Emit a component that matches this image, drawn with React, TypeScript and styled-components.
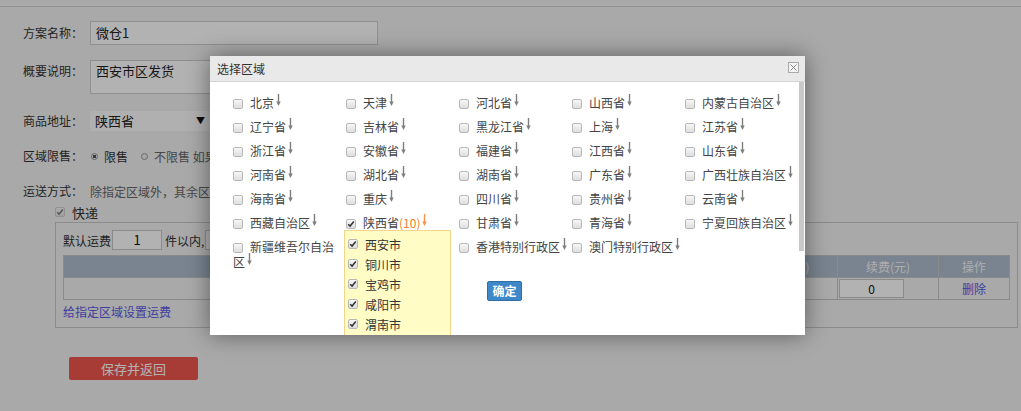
import React from 'react';
import styled, { createGlobalStyle } from 'styled-components';

const GlobalStyle = createGlobalStyle`
  html, body {
    margin: 0;
    padding: 0;
  }
  body {
    font-family: "Noto Sans CJK SC", "Liberation Sans", sans-serif;
    font-size: 12px;
    color: #333;
    overflow: hidden;
  }
`;

const Page = styled.div`
  position: relative;
  width: 1021px;
  height: 411px;
  background: #f2f2f2;
  overflow: hidden;
`;

const TopBar = styled.div`
  height: 6px;
  border-bottom: 1px solid #d2d2d2;
`;

const Form = styled.div`
  padding: 14px 0 0 23px;
`;

const Row = styled.div<{ $h: number; $mt: number; $top?: boolean }>`
  display: flex;
  align-items: ${(p) => (p.$top ? 'flex-start' : 'center')};
  height: ${(p) => p.$h}px;
  margin-top: ${(p) => p.$mt}px;
`;

const Label = styled.span<{ $pt?: number }>`
  width: 67px;
  line-height: 16px;
  padding-top: ${(p) => p.$pt || 0}px;
  color: #333;
  white-space: nowrap;
`;

const TextInput = styled.div`
  box-sizing: border-box;
  width: 288px;
  height: 24px;
  border: 1px solid #cfcfcf;
  background: #fff;
  padding: 0 5px;
  line-height: 22px;
  font-size: 13px;
  color: #222;
`;

const TextArea = styled.div`
  box-sizing: border-box;
  width: 288px;
  height: 34px;
  border: 1px solid #cfcfcf;
  background: #fff;
  padding: 2px 5px;
  line-height: 16px;
  font-size: 13px;
  color: #222;
`;

const SelectBox = styled.div`
  box-sizing: border-box;
  width: 120px;
  height: 20px;
  background: #fcfcfc;
  padding: 0 5px;
  display: flex;
  align-items: center;
  justify-content: space-between;
  line-height: 20px;
  font-size: 13px;
  color: #222;
`;

const Caret = styled.span`
  font-size: 9px;
  color: #111;
`;

const Radio = styled.span<{ $on?: boolean }>`
  box-sizing: border-box;
  width: 7px;
  height: 7px;
  border-radius: 50%;
  border: 1px solid #999;
  background: ${(p) => (p.$on ? 'radial-gradient(circle, #555 0 1.5px, #eee 2px)' : '#eee')};
  margin: 0 6px 0 1px;
`;

const RadioText = styled.span`
  margin-right: 12px;
  color: #333;
  white-space: nowrap;
`;

const Hint = styled.span`
  color: #666;
  white-space: nowrap;
`;

const Check = styled.span<{ $faded?: boolean }>`
  box-sizing: border-box;
  display: inline-block;
  width: 10px;
  height: 10px;
  border: 1px solid #b8b8b8;
  border-radius: 2px;
  background: linear-gradient(#f7f7f7, #dedede);
  position: relative;
  vertical-align: -1px;
  flex-shrink: 0;
  opacity: ${(p) => (p.$faded ? 0.6 : 1)};
  svg {
    position: absolute;
    left: 0px;
    top: 0px;
  }
`;

const ShipRow = styled.div`
  display: flex;
  align-items: center;
  height: 16px;
  margin: 5px 0 0 32px;
  gap: 7px;
  font-size: 13px;
`;

const ShipBox = styled.div`
  box-sizing: border-box;
  width: 963px;
  height: 106px;
  margin: 2px 0 0 32px;
  border: 1px solid #c8c8c8;
  padding: 7px 0 0 7px;
`;

const FeeLine = styled.div`
  display: flex;
  align-items: center;
  height: 20px;
  white-space: nowrap;
`;

const SmallInput = styled.div<{ $w: number }>`
  box-sizing: border-box;
  width: ${(p) => p.$w}px;
  height: 20px;
  border: 1px solid #c8c8c8;
  background: #fff;
  text-align: center;
  line-height: 18px;
  font-size: 13px;
  color: #111;
  margin: 0 3px 0 1px;
`;

const Table = styled.table`
  width: 946px;
  margin-top: 5px;
  border-collapse: collapse;
  table-layout: fixed;
  th, td {
    border: 1px solid #c6c6c6;
    height: 21px;
    padding: 0;
    text-align: center;
    font-weight: normal;
  }
  th {
    background: #aebdce;
    color: #f8f8f8;
  }
  td {
    background: #f2f2f2;
  }
`;

const CellInput = styled.div`
  box-sizing: border-box;
  width: 65px;
  height: 19px;
  margin-left: 1px;
  border: 1px solid #c8c8c8;
  background: #fff;
  line-height: 17px;
  color: #111;
`;

const LinkText = styled.span`
  color: #5a5ae4;
`;

const AreaLink = styled.div`
  margin-top: 4px;
  line-height: 16px;
  color: #5a5ae4;
`;

const SaveButton = styled.div`
  width: 129px;
  height: 23px;
  margin: 29px 0 0 46px;
  background: #ef5650;
  border-radius: 2px;
  color: #fff;
  font-size: 13px;
  line-height: 23px;
  text-align: center;
`;

const Mask = styled.div`
  position: absolute;
  inset: 0;
  background: rgba(0, 0, 0, 0.3);
`;

const Dialog = styled.div`
  position: absolute;
  left: 210px;
  top: 56px;
  width: 595px;
  height: 279px;
  background: #fff;
  box-shadow: 0 0 22px rgba(0, 0, 0, 0.45);
  display: flex;
  flex-direction: column;
`;

const DialogHead = styled.div`
  height: 25px;
  flex-shrink: 0;
  background: #e9e9e9;
  border-bottom: 1px solid #d4d4d4;
  display: flex;
  align-items: center;
  justify-content: space-between;
  padding: 0 6px 0 7px;
  color: #333;
`;

const CloseBox = styled.span`
  box-sizing: border-box;
  width: 11px;
  height: 11px;
  border: 1px solid #aaa;
  background: #f4f4f4;
  display: flex;
  align-items: center;
  justify-content: center;
  margin-top: -2px;
`;

const DialogBody = styled.div`
  position: relative;
  flex: 1;
  overflow: hidden;
`;

const ScrollThumb = styled.div`
  position: absolute;
  right: 1px;
  top: 0;
  width: 5px;
  height: 169px;
  background: #c9c9c9;
  z-index: 3;
`;

const AreaGrid = styled.div`
  display: grid;
  grid-template-columns: repeat(5, 111px);
  column-gap: 2px;
  padding: 8px 0 0 23px;
  align-items: start;
`;

const AreaItem = styled.div`
  position: relative;
  padding: 5px 0 4px;
  line-height: 15px;
  color: #444;
  font-size: 12px;
  > ${Check} {
    margin-right: 7px;
  }
`;

const Count = styled.span`
  color: #f57f22;
`;

const ArrowIcon = styled.svg`
  display: inline-block;
  margin-left: 2px;
  vertical-align: baseline;
  position: relative;
  top: -2px;
`;

const CityPopup = styled.div`
  position: absolute;
  left: -2px;
  top: 20px;
  width: 107px;
  box-sizing: border-box;
  border: 1px solid #f3d68c;
  background: #fffcc6;
  padding: 3px 0 6px 3px;
  z-index: 2;
`;

const CityRow = styled.div`
  display: flex;
  align-items: center;
  height: 20px;
  gap: 7px;
  color: #333;
`;

const ConfirmWrap = styled.div`
  text-align: center;
  margin: 8px 6px 0 0;
  padding-bottom: 10px;
`;

const ConfirmButton = styled.span`
  display: inline-block;
  box-sizing: border-box;
  width: 35px;
  height: 20px;
  background: #3e88c9;
  border: 1px solid #2e6ea6;
  border-radius: 2px;
  color: #fff;
  font-weight: bold;
  line-height: 18px;
  text-align: center;
`;

const Arrow = ({ color = '#7e7e7e' }: { color?: string }) => (
  <ArrowIcon width="5" height="12" viewBox="0 0 5 12">
    <path d="M2.5 0 V9" stroke={color} strokeWidth="1.4" />
    <path d="M0.3 7.4 L2.5 12 L4.7 7.4 Z" fill={color} />
  </ArrowIcon>
);

const CheckBox = ({ on, faded }: { on?: boolean; faded?: boolean }) => (
  <Check $faded={faded}>
    {on && (
      <svg width="8" height="8" viewBox="0 0 8 8">
        <path d="M1.2 4.2 L3.1 6.1 L6.8 1.6" stroke="#333" strokeWidth="1.5" fill="none" />
      </svg>
    )}
  </Check>
);

const provinces = [
  '北京', '天津', '河北省', '山西省', '内蒙古自治区',
  '辽宁省', '吉林省', '黑龙江省', '上海', '江苏省',
  '浙江省', '安徽省', '福建省', '江西省', '山东省',
  '河南省', '湖北省', '湖南省', '广东省', '广西壮族自治区',
  '海南省', '重庆', '四川省', '贵州省', '云南省',
  '西藏自治区', '陕西省', '甘肃省', '青海省', '宁夏回族自治区',
  '新疆维吾尔自治区', '台湾省', '香港特别行政区', '澳门特别行政区',
];

const cities = ['西安市', '铜川市', '宝鸡市', '咸阳市', '渭南市', '延安市', '汉中市', '榆林市', '安康市', '商洛市'];

const App = () => {
  return (
    <Page>
      <GlobalStyle />
      <TopBar />
      <Form>
        <Row $h={24} $mt={0}>
          <Label>方案名称：</Label>
          <TextInput>微仓1</TextInput>
        </Row>
        <Row $h={34} $mt={15} $top>
          <Label $pt={3}>概要说明：</Label>
          <TextArea>西安市区发货</TextArea>
        </Row>
        <Row $h={20} $mt={17}>
          <Label>商品地址：</Label>
          <SelectBox>
            陕西省<Caret>▼</Caret>
          </SelectBox>
        </Row>
        <Row $h={16} $mt={17}>
          <Label>区域限售：</Label>
          <Radio $on />
          <RadioText>限售</RadioText>
          <Radio />
          <Hint>不限售 如果选择限售，则仅以下区域的客户可以购买该商品</Hint>
        </Row>
        <Row $h={16} $mt={19}>
          <Label>运送方式：</Label>
          <Hint>除指定区域外，其余区域的运费采用“默认运费”</Hint>
        </Row>
        <ShipRow>
          <CheckBox on faded />
          <span>快递</span>
        </ShipRow>
        <ShipBox>
          <FeeLine>
            默认运费<SmallInput $w={50}>1</SmallInput>件以内,<SmallInput $w={50}>0</SmallInput>元，每增加
          </FeeLine>
          <Table>
            <colgroup>
              <col style={{ width: 404 }} />
              <col style={{ width: 135 }} />
              <col style={{ width: 135 }} />
              <col style={{ width: 100 }} />
              <col style={{ width: 101 }} />
              <col style={{ width: 71 }} />
            </colgroup>
            <thead>
              <tr>
                <th>运送到</th>
                <th>首件(个)</th>
                <th>首费(元)</th>
                <th>续件(个)</th>
                <th>续费(元)</th>
                <th>操作</th>
              </tr>
            </thead>
            <tbody>
              <tr>
                <td>陕西省</td>
                <td>1</td>
                <td>0</td>
                <td>1</td>
                <td>
                  <CellInput>0</CellInput>
                </td>
                <td>
                  <LinkText>删除</LinkText>
                </td>
              </tr>
            </tbody>
          </Table>
          <AreaLink>给指定区域设置运费</AreaLink>
        </ShipBox>
        <SaveButton>保存并返回</SaveButton>
      </Form>

      <Mask>
        <Dialog>
          <DialogHead>
            <span>选择区域</span>
            <CloseBox>
              <svg width="7" height="7" viewBox="0 0 7 7">
                <path d="M0.5 0.5 L6.5 6.5 M6.5 0.5 L0.5 6.5" stroke="#888" strokeWidth="1" />
              </svg>
            </CloseBox>
          </DialogHead>
          <DialogBody>
            <ScrollThumb />
            <AreaGrid>
              {provinces.map((name) => {
                const picked = name === '陕西省';
                return (
                  <AreaItem key={name}>
                    <CheckBox on={picked} />
                    {name}
                    {picked && <Count>(10)</Count>}
                    <Arrow color={picked ? '#f5934a' : '#7e7e7e'} />
                    {picked && (
                      <CityPopup>
                        {cities.map((c) => (
                          <CityRow key={c}>
                            <CheckBox on />
                            {c}
                          </CityRow>
                        ))}
                      </CityPopup>
                    )}
                  </AreaItem>
                );
              })}
            </AreaGrid>
            <ConfirmWrap>
              <ConfirmButton>确定</ConfirmButton>
            </ConfirmWrap>
          </DialogBody>
        </Dialog>
      </Mask>
    </Page>
  );
};

export default App;
